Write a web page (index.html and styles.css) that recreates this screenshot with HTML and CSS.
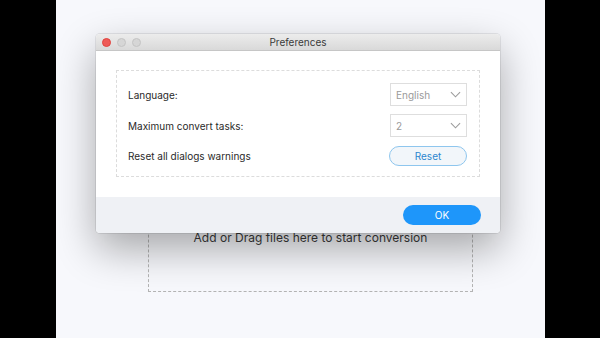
FILE: index.html
```html
<!DOCTYPE html>
<html lang="en">
<head>
    <meta charset="UTF-8">
    <title>Preferences</title>
    <link rel="stylesheet" href="styles.css">
</head>
<body>
    <div class="stage">
        <div class="dropzone">
            <p class="drop-text">Add or Drag files here to start conversion</p>
        </div>

        <div class="dialog">
            <div class="titlebar">
                <div class="lights">
                    <span class="light red"></span>
                    <span class="light"></span>
                    <span class="light"></span>
                </div>
                <span class="title">Preferences</span>
            </div>

            <div class="dialog-body">
                <div class="settings">
                    <div class="row">
                        <span class="row-label">Language:</span>
                        <div class="select">
                            <span>English</span>
                            <svg class="chevron" viewBox="0 0 12 7"><path d="M1 1 L6 6 L11 1" /></svg>
                        </div>
                    </div>
                    <div class="row">
                        <span class="row-label">Maximum convert tasks:</span>
                        <div class="select">
                            <span>2</span>
                            <svg class="chevron" viewBox="0 0 12 7"><path d="M1 1 L6 6 L11 1" /></svg>
                        </div>
                    </div>
                    <div class="row">
                        <span class="row-label">Reset all dialogs warnings</span>
                        <button class="reset-btn">Reset</button>
                    </div>
                </div>
            </div>

            <div class="footer">
                <button class="ok-btn">OK</button>
            </div>
        </div>
    </div>
</body>
</html>
```

FILE: styles.css
```css
* {
    margin: 0;
    padding: 0;
    box-sizing: border-box;
    font-family: 'Inter', 'Liberation Sans', sans-serif;
}

body {
    background: #000000;
    display: flex;
    justify-content: center;
    height: 338px;
    overflow: hidden;
}

.stage {
    position: relative;
    width: 489px;
    height: 338px;
    margin-left: 1px;
    background: #f7f8fc;
    padding-top: 200px;
}

.dropzone {
    margin-left: 92px;
    width: 325px;
    height: 92px;
    border: 1px dashed #b4b4b4;
    padding-top: 30px;
}

.drop-text {
    text-align: center;
    font-size: 12px;
    line-height: 14px;
    color: #3a3a3a;
}

.dialog {
    position: absolute;
    left: 40px;
    top: 34px;
    width: 404px;
    height: 199px;
    background: #ffffff;
    border-radius: 4px;
    overflow: hidden;
    box-shadow: 0 16px 40px rgba(0, 0, 0, 0.33), 0 0 0 1px rgba(0, 0, 0, 0.08);
    display: flex;
    flex-direction: column;
}

.titlebar {
    position: relative;
    height: 17px;
    background: linear-gradient(#ececec, #d9d9d9);
    border-bottom: 1px solid #c6c6c6;
    display: flex;
    align-items: center;
    justify-content: center;
}

.lights {
    position: absolute;
    left: 6px;
    top: 4px;
    display: flex;
    gap: 6px;
}

.light {
    width: 9px;
    height: 9px;
    border-radius: 50%;
    background: #d6d6d6;
    border: 1px solid #c4c4c4;
}

.light.red {
    background: #ee5a57;
    border-color: #e0443f;
}

.title {
    font-size: 10px;
    color: #3a3a3a;
}

.dialog-body {
    height: 146px;
    padding: 19px 20px 0 20px;
}

.settings {
    height: 107px;
    border: 1px dashed #dcdcdc;
    padding: 12px 12px 0 11px;
    display: flex;
    flex-direction: column;
}

.row {
    display: flex;
    align-items: center;
    justify-content: space-between;
    margin-bottom: 8px;
}

.row-label {
    font-size: 10px;
    color: #2a2a2a;
}

.select {
    width: 77px;
    height: 23px;
    border: 1px solid #dedede;
    display: flex;
    align-items: center;
    justify-content: space-between;
    padding: 0 5px 0 5px;
    font-size: 10px;
    color: #9a9a9a;
}

.chevron {
    width: 11px;
    height: 7px;
    fill: none;
    stroke: #9c9c9c;
    stroke-width: 1.2;
}

.reset-btn {
    width: 78px;
    height: 20px;
    border-radius: 10px;
    border: 1px solid #8ec6ee;
    background: #f2f6fa;
    color: #2d86cf;
    font-size: 10px;
    margin-top: 1px;
}

.footer {
    flex: 1;
    background: #eff1f5;
    display: flex;
    justify-content: flex-end;
    align-items: flex-start;
    padding: 8px 19px 0 0;
}

.ok-btn {
    width: 78px;
    height: 20px;
    border-radius: 10px;
    border: none;
    background: #1e96fa;
    color: #ffffff;
    font-size: 10px;
}
```
